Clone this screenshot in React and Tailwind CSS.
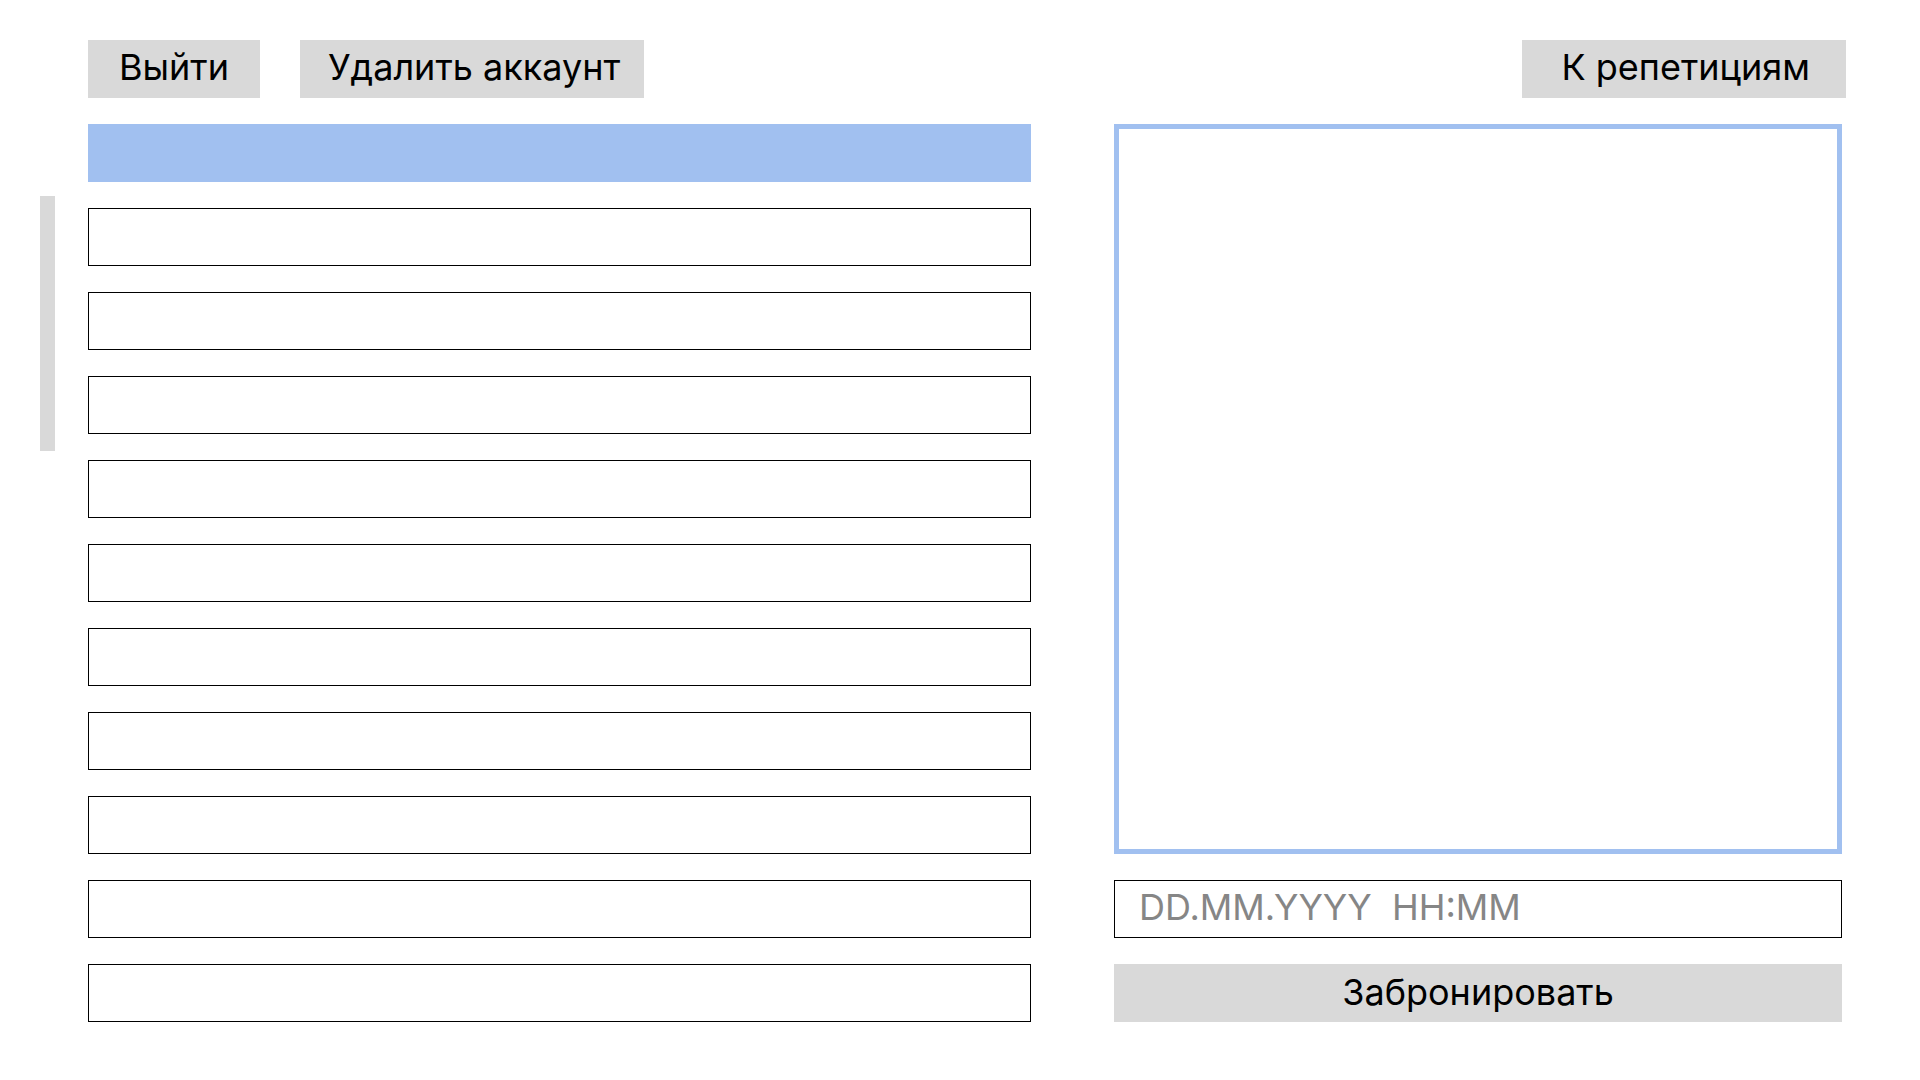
import { useState } from "react";

const ROWS = Array.from({ length: 11 }, (_, i) => i);

function Button({ className = "", children }) {
  return (
    <button
      type="button"
      className={`h-[58px] bg-[#d9d9d9] text-4xl leading-[44px] text-black hover:bg-[#cecece] ${className}`}
    >
      {children}
    </button>
  );
}

function Header() {
  return (
    <header className="flex items-center gap-10 pr-[74px] pl-[88px]">
      <Button className="px-[31px] pb-1">Выйти</Button>
      <Button className="pr-6 pb-1 pl-7">Удалить аккаунт</Button>
      <Button className="ml-auto pr-9 pb-1 pl-[39px]">К репетициям</Button>
    </header>
  );
}

function RehearsalList() {
  const [selected, setSelected] = useState(0);
  return (
    <ul className="flex flex-[943] flex-col gap-[26px]">
      {ROWS.map((i) => (
        <li key={i} className="flex">
          <button
            type="button"
            aria-label={`Строка ${i + 1}`}
            aria-pressed={selected === i}
            onClick={() => setSelected(i)}
            className={`h-[58px] w-full ${
              selected === i ? "bg-[#a1c0f0]" : "border border-black bg-white"
            }`}
          />
        </li>
      ))}
    </ul>
  );
}

function BookingPanel() {
  return (
    <form className="flex flex-[728] flex-col gap-[26px]" onSubmit={(e) => e.preventDefault()}>
      <section aria-label="Детали" className="grow border-[5px] border-[#a1c0f0] bg-white" />
      <input
        type="text"
        aria-label="Дата и время"
        placeholder="DD.MM.YYYY  HH:MM"
        className="h-[58px] w-full border border-black bg-white pb-1 pl-6 text-4xl leading-[44px] text-black placeholder:text-[#868686]"
      />
      <Button className="w-full pb-0.5">Забронировать</Button>
    </form>
  );
}

export default function App() {
  return (
    <div className="flex min-h-screen flex-col gap-[26px] bg-white py-10 font-['Inter',sans-serif]">
      <Header />
      <main className="flex pr-[78px] pl-10">
        {/* Scroll thumb of the list */}
        <div className="mt-[72px] mr-[33px] h-[255px] w-[15px] shrink-0 bg-[#d9d9d9]" />
        <RehearsalList />
        <div className="w-[83px] shrink-0" />
        <BookingPanel />
      </main>
    </div>
  );
}
